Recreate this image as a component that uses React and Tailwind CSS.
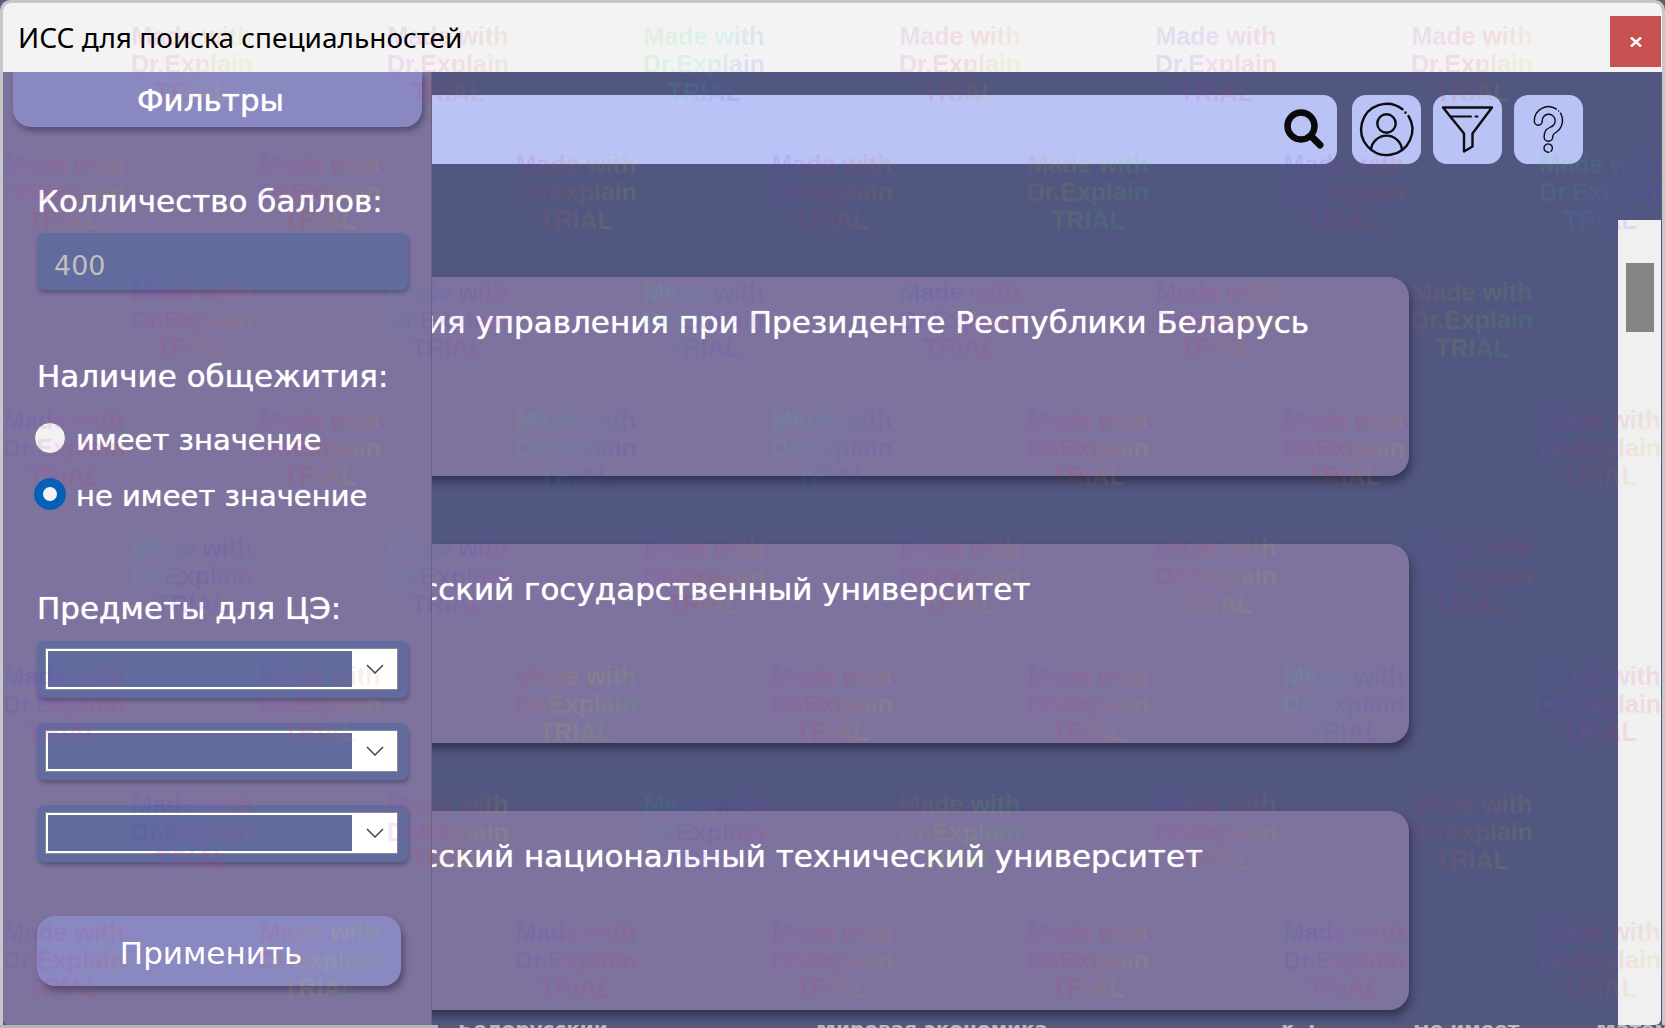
import React from "react";

const universities = [
  "Академия управления при Президенте Республики Беларусь",
  "Белорусский государственный университет",
  "Белорусский национальный технический университет",
];

// Starting hue of every stamp; even rows begin one tile to the right.
const stampHues = [
  [270, 240, 80, 260, 200, 260],
  [250, 260, 280, 240, 350, 220, 100],
  [240, 160, 120, 190, 240, 340],
  [210, 260, 100, 110, 260, 260, 250],
  [140, 150, 250, 250, 280, 220],
  [200, 250, 320, 260, 250, 120, 200],
  [200, 270, 150, 340, 250, 280],
  [220, 320, 210, 250, 260, 200, 250],
];

function Stamp({ hue }) {
  const stops = [0, 50, 100, 150, 200].map((d) => `hsl(${(hue + d) % 360} 75% 50%)`).join(", ");
  return (
    <div
      className="w-32 h-32 shrink-0 mr-32 pt-[22px] pl-1 bg-clip-text text-transparent opacity-10"
      style={{ backgroundImage: `linear-gradient(120deg, ${stops})` }}
    >
      <div className="w-[120px] flex flex-col items-center whitespace-nowrap font-['Liberation_Sans',sans-serif] font-bold text-[25px] leading-[28px]">
        <span>Made with</span>
        <span>Dr.Explain</span>
        <span>TRIAL</span>
      </div>
    </div>
  );
}

function Watermark() {
  return (
    <div aria-hidden="true" className="absolute inset-0 overflow-hidden pointer-events-none z-30">
      {stampHues.map((row, r) => (
        <div key={r} className="flex h-32 even:pl-0 odd:pl-32">
          {row.map((hue, i) => (
            <Stamp key={i} hue={hue} />
          ))}
        </div>
      ))}
    </div>
  );
}

function IconButton({ label, children }) {
  return (
    <button type="button" aria-label={label} className="w-[69px] h-[69px] shrink-0 rounded-[14px] bg-[#b9c3f5]">
      <svg viewBox="0 0 69 69" className="w-full h-full" fill="none" stroke="#0c0c10" strokeLinecap="round" strokeLinejoin="round">
        {children}
      </svg>
    </button>
  );
}

function SubjectSelect({ label }) {
  return (
    <div className="relative h-[57px] rounded-[7px] bg-[#626b9d] shadow-[1px_3px_4px_rgba(50,45,80,0.45)] pl-2 pr-[10px] pt-[7px] pb-2">
      <select
        aria-label={label}
        className="block appearance-none w-full h-[42px] border border-[#8a8a90] bg-[#626b9d] rounded-none shadow-[inset_0_0_0_2px_#fff] text-white text-[24px] px-3"
      >
        <option></option>
      </select>
      <span className="absolute right-[11px] top-2 w-[45px] h-10 bg-white pointer-events-none flex items-center justify-center">
        <svg viewBox="0 0 18 10" className="w-[18px] h-[10px]" fill="none" stroke="#444" strokeWidth="1.5">
          <path d="M1 1l8 8 8-8" />
        </svg>
      </span>
    </div>
  );
}

function Radio({ label, defaultChecked }) {
  return (
    <label className="flex items-center gap-[10px] h-9 -ml-[3px]">
      <input
        type="radio"
        name="dorm"
        defaultChecked={defaultChecked}
        className="appearance-none w-8 h-8 shrink-0 rounded-full bg-[#f2f2f2] border border-[#77737c] checked:border-[9px] checked:border-[#0560b8]"
      />
      <span className="pt-1 text-[29px] leading-9 whitespace-nowrap">{label}</span>
    </label>
  );
}

function FilterPanel() {
  return (
    <aside className="absolute left-0 top-0 bottom-0 w-[429px] z-20 bg-[#7e739e] border-r border-[#6a6478] rounded-bl-[6px] text-white text-[31px] leading-9 [text-shadow:0_0_1px_#fff]">
      <h2 className="ml-[10px] mr-[9px] h-[55px] rounded-b-[18px] bg-[#8a88c0] text-center pt-[10px] pr-[14px] shadow-[2px_4px_6px_rgba(50,45,80,0.55)]">
        Фильтры
      </h2>
      <form className="flex flex-col pl-[34px] pr-[23px] pt-14" onSubmit={(e) => e.preventDefault()}>
        <label htmlFor="score" className="whitespace-nowrap">
          Колличество баллов:
        </label>
        <input
          id="score"
          type="text"
          placeholder="400"
          className="mt-[14px] w-full h-[57px] rounded-[7px] bg-[#626b9d] px-[17px] pt-2 text-[27px] placeholder:text-[#bfbfbf] placeholder:opacity-100 [text-shadow:none] shadow-[1px_3px_4px_rgba(50,45,80,0.45)]"
        />
        <fieldset className="mt-[68px]">
          <legend className="whitespace-nowrap">Наличие общежития:</legend>
          <div className="flex flex-col gap-5 pt-[26px]">
            <Radio label="имеет значение" />
            <Radio label="не имеет значение" defaultChecked />
          </div>
        </fieldset>
        <h3 className="mt-[78px]">Предметы для ЦЭ:</h3>
        <div className="flex flex-col gap-[25px] mt-[15px]">
          <SubjectSelect label="Предмет 1" />
          <SubjectSelect label="Предмет 2" />
          <SubjectSelect label="Предмет 3" />
        </div>
        <button type="submit" className="mt-[54px] mr-[7px] h-[70px] rounded-[18px] bg-[#8a88c0] pt-1 pr-4 shadow-[3px_5px_6px_rgba(50,45,80,0.55)]">
          Применить
        </button>
      </form>
    </aside>
  );
}

export default function App() {
  return (
    <div className="relative w-full h-screen overflow-hidden flex flex-col bg-[#5c5a76] font-['DejaVu_Sans',sans-serif]">
      <div className="flex-1 min-h-0 flex flex-col border-[3px] border-b-0 border-[#c7c7c7] rounded-t-[10px] bg-[#525781]">
        <header className="h-[69px] shrink-0 flex items-center justify-between pl-[15px] bg-[#f3f3f3] rounded-t-[7px]">
          <h1 className="pb-[2px] font-['Noto_Sans','Open_Sans',sans-serif] text-[28px] leading-9 text-black whitespace-nowrap">
            ИСС для поиска специальностей
          </h1>
          <button type="button" aria-label="Закрыть" className="w-[51px] h-[51px] mt-[8px] mr-px bg-[#c75050] flex items-center justify-center">
            <svg viewBox="0 0 12 10" className="w-3 h-[10px]" stroke="#fff" strokeWidth="2.5">
              <path d="M1 0.5l10 9M11 0.5l-10 9" />
            </svg>
          </button>
        </header>

        <div className="relative flex-1 min-h-0 flex flex-col overflow-hidden">
          <FilterPanel />
          <div className="flex shrink-0 pt-[23px] pr-[79px] pl-10">
            <div className="flex flex-1 items-center h-[69px] rounded-[14px] bg-[#b9c3f5] mr-[15px] pr-3">
              <input type="search" aria-label="Поиск" className="flex-1 h-full bg-transparent text-[28px] outline-none" />
              <button type="button" aria-label="Найти" className="w-[42px] h-[42px]">
                <svg viewBox="0 0 42 42" className="w-full h-full" fill="none" stroke="#0a0a0c" strokeLinecap="round">
                  <circle cx="18" cy="17" r="13.5" strokeWidth="6.5" />
                  <path d="M28 27l9 9" strokeWidth="7" />
                </svg>
              </button>
            </div>
            <div className="flex gap-3">
              <IconButton label="Профиль">
                <g strokeWidth="2.4">
                  <path d="M56.500 21A25.600 25.600 0 1 1 50.500 14.300" />
                  <path d="M53.500 17.500v.2" />
                  <circle cx="34.500" cy="28.500" r="9.200" />
                  <path d="M19 54.500A15.600 15.600 0 0 1 50 54.500" />
                </g>
              </IconButton>
              <IconButton label="Фильтр">
                <path strokeWidth="2.400" d="M10 12.500H59L39.500 38.500V51.500L31 56.500V38.500Z" />
                <path strokeWidth="2" d="M17 21.500H38M42.500 21.500H44.500" />
              </IconButton>
              <IconButton label="Помощь">
                <g strokeWidth="1.4">
                  <path d="M46.500 18.200A14.200 14.200 0 0 1 42.500 37Q38.700 39 38.700 42A4.300 4.300 0 0 1 30.100 42C30.100 36 32 34.500 36.500 32A6.500 6.500 0 1 0 28.200 26A3.950 4.300 0 0 1 20.300 26A14.200 14.200 0 0 1 42.500 14.100" />
                  <path d="M44.600 16v.1" />
                  <path d="M35 57.200A4.200 4.200 0 1 1 37 56.200" />
                </g>
              </IconButton>
            </div>
          </div>

          <div className="flex flex-1 min-h-0 mt-14">
            <main className="flex-1 min-h-0 overflow-hidden flex flex-col gap-[68px] pt-[57px] pl-[247px] pr-[209px]">
              {universities.map((name) => (
                <article
                  key={name}
                  className="h-[199px] shrink-0 rounded-[20px] bg-[#7e739e] px-[54px] pt-[27px] shadow-[2px_6px_9px_rgba(35,35,60,0.65)]"
                >
                  <h2 className="text-[31px] leading-9 text-white whitespace-nowrap [text-shadow:0_0_1px_#fff]">{name}</h2>
                </article>
              ))}
            </main>
            <div className="w-[43px] mr-px shrink-0 bg-[#f0f0f0] pt-[43px] pl-2 rounded-br-[6px]">
              <div className="w-7 h-[69px] bg-[#858585]"></div>
            </div>
          </div>
        </div>
      </div>

      <div className="flex h-[3px] shrink-0 overflow-hidden font-bold text-[20px] leading-[20px] text-[#bdb9bd] whitespace-nowrap">
        <div className="w-[438px] shrink-0 bg-[#b6b5b8]"></div>
        <div className="flex -mt-[6px]">
          <span className="w-[378px] pl-5">Белорусский</span>
          <span className="w-[465px]">Мировая экономика</span>
          <span className="w-[132px]">К 1</span>
          <span className="w-[183px]">Не имеет</span>
          <span>Математика</span>
        </div>
      </div>
      <Watermark />
    </div>
  );
}
